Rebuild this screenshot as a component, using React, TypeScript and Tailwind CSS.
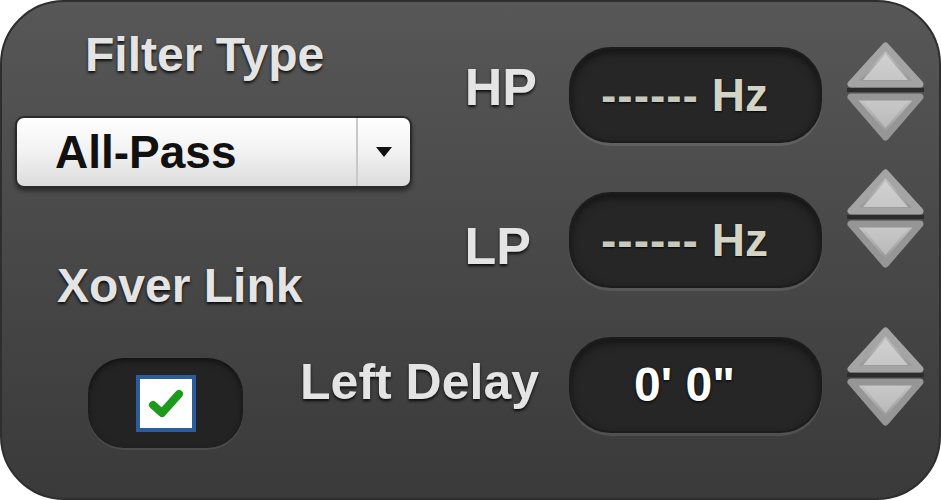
const label = "font-['Liberation_Sans',Arial,sans-serif] font-bold text-[#e4e4e4] leading-none whitespace-nowrap [text-shadow:0_2px_3px_rgba(0,0,0,0.85)]";

function Spinner({ className }: { className: string }) {
  return (
    <svg width="77" height="103" viewBox="0 0 77 103" className={className}>
      <defs>
        <linearGradient id="sp" x1="0" y1="0" x2="0" y2="1">
          <stop offset="0" stopColor="#c8c8c8" />
          <stop offset="1" stopColor="#929292" />
        </linearGradient>
      </defs>
      <polygon points="38.5,6 4,44 73,44" fill="url(#sp)" stroke="#a4a4a4" strokeWidth="7" strokeLinejoin="round" />
      <polygon points="38.5,14 16,40 61,40" fill="#dadada" opacity="0.7" />
      <rect x="0" y="48" width="77" height="4" fill="#2c2c2c" />
      <polygon points="4,57 73,57 38.5,97" fill="url(#sp)" stroke="#969696" strokeWidth="7" strokeLinejoin="round" />
      <polygon points="16,61 61,61 38.5,88" fill="#cccccc" opacity="0.6" />
    </svg>
  );
}

function Field({ children }: { children: React.ReactNode }) {
  return (
    <div className="flex h-[96px] w-[253px] shrink-0 items-center justify-center rounded-[42px] border-2 border-[#1c1c1c] bg-[#262626] pr-[22px] shadow-[0_3px_0_rgba(255,255,255,0.1),inset_0_4px_8px_rgba(0,0,0,0.5)]">
      {children}
    </div>
  );
}

function HzValue() {
  return (
    <span className="font-['Liberation_Sans',Arial,sans-serif] text-[46px] font-bold leading-none text-[#d4d4c4] [text-shadow:0_1px_2px_rgba(0,0,0,0.9)]">
      <span className="tracking-[1px] text-[#c8c8bc]">------</span> Hz
    </span>
  );
}

export default function App() {
  return (
    <div className="h-[500px] w-[941px] bg-white">
      <div className="flex h-full w-full rounded-[64px] border-2 border-[#2e2e2e] bg-gradient-to-b from-[#575757] to-[#3a3a3a]">
        {/* left column */}
        <div className="flex w-[440px] shrink-0 flex-col pt-[29px]">
          <div className={label + " ml-[83px] text-[48px]"}>Filter Type</div>
          <div className="ml-[13px] mt-[37px] flex h-[72px] w-[397px] items-stretch rounded-[9px] border-2 border-[#2a2a2a] bg-gradient-to-b from-white via-[#f2f2f2] to-[#dcdcdc] shadow-[0_3px_4px_rgba(0,0,0,0.45)]">
            <div className="flex flex-1 items-center pl-[38px] font-['Liberation_Sans',Arial,sans-serif] text-[46px] font-bold leading-none text-[#111]">
              All-Pass
            </div>
            <div className="flex w-[54px] items-center justify-center border-l-2 border-[#c8c8c8]">
              <svg width="18" height="12" viewBox="0 0 18 12">
                <polygon points="1,1 17,1 9,11" fill="#111" />
              </svg>
            </div>
          </div>
          <div className={label + " ml-[55px] mt-[74px] text-[48px]"}>Xover Link</div>
          <div className="ml-[86px] mt-[48px] flex h-[90px] w-[155px] items-center justify-center rounded-[36px] bg-[#232323] shadow-[0_2px_0_rgba(255,255,255,0.08),inset_0_3px_6px_rgba(0,0,0,0.5)]">
            <div className="flex h-[57px] w-[60px] items-center justify-center border-[4px] border-[#2c5c9c] bg-white">
              <svg width="40" height="34" viewBox="0 0 40 34">
                <path d="M7 19 L16 27 L33 8" fill="none" stroke="#1c9a1c" strokeWidth="8" strokeLinecap="round" strokeLinejoin="round" />
              </svg>
            </div>
          </div>
        </div>

        {/* right column */}
        <div className="flex flex-col gap-[49px] pt-[45px]">
          <div className="flex h-[96px] items-start">
            <div className={label + " mt-[14px] w-[97px] pr-[2px] text-right text-[52px]"}>HP</div>
            <div className="ml-[30px]">
              <Field>
                <HzValue />
              </Field>
            </div>
            <Spinner className="ml-[25px] mt-[-7px] shrink-0" />
          </div>
          <div className="flex h-[96px] items-start">
            <div className={label + " mt-[28px] w-[97px] pr-[8px] text-right text-[52px]"}>LP</div>
            <div className="ml-[30px]">
              <Field>
                <HzValue />
              </Field>
            </div>
            <Spinner className="ml-[25px] mt-[-25px] shrink-0" />
          </div>
          <div className="flex h-[96px] items-start">
            <div className={label + " mt-[20px] flex w-[97px] justify-end text-[50px]"}>
              <span>Left Delay</span>
            </div>
            <div className="ml-[30px]">
              <Field>
                <span className="font-['Liberation_Sans',Arial,sans-serif] text-[48px] font-bold leading-none text-white [text-shadow:0_1px_3px_rgba(0,0,0,1)]">
                  0' 0"
                </span>
              </Field>
            </div>
            <Spinner className="ml-[25px] mt-[-12px] shrink-0" />
          </div>
        </div>
      </div>
    </div>
  );
}
